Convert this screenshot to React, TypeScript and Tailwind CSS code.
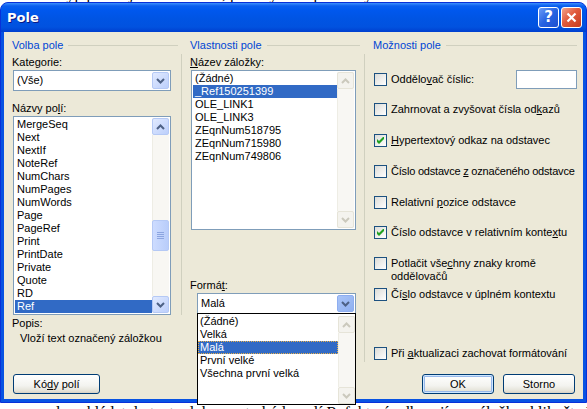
import React from 'react';

const fieldNames = ['MergeSeq', 'Next', 'NextIf', 'NoteRef', 'NumChars', 'NumPages', 'NumWords', 'Page', 'PageRef', 'Print', 'PrintDate', 'Private', 'Quote', 'RD', 'Ref'];
const bookmarks = ['(Žádné)', '_Ref150251399', 'OLE_LINK1', 'OLE_LINK3', 'ZEqnNum518795', 'ZEqnNum715980', 'ZEqnNum749806'];
const formats = ['(Žádné)', 'Velká', 'Malá', 'První velké', 'Všechna první velká'];

function Chevron({ dir, color }: { dir: 'up' | 'down'; color: string }) {
  return (
    <svg width="9" height="6" viewBox="0 0 9 6">
      <polyline points={dir === 'up' ? '1,5 4.5,1.5 8,5' : '1,1 4.5,4.5 8,1'} fill="none" stroke={color} strokeWidth="2" />
    </svg>
  );
}

function ScrollBtn({ dir, disabled }: { dir: 'up' | 'down'; disabled?: boolean }) {
  return (
    <div className={disabled
      ? 'w-[17px] h-[17px] shrink-0 rounded-[2px] border border-[#e6e4d8] bg-[#f4f3ee] flex items-center justify-center'
      : 'w-[17px] h-[17px] shrink-0 rounded-[2px] border border-[#b5c9f5] bg-[linear-gradient(135deg,#e1eaff,#bccffb)] flex items-center justify-center'}>
      <Chevron dir={dir} color={disabled ? '#cbc9bd' : '#4d6185'} />
    </div>
  );
}

function ScrollBar({ disabled, thumbTop }: { disabled?: boolean; thumbTop?: number }) {
  return (
    <div className="w-[17px] h-full flex flex-col bg-[#f8f7f3]">
      <ScrollBtn dir="up" disabled={disabled} />
      <div className="flex-1 border-l border-[#eeede5]">
        {thumbTop !== undefined && (
          <div style={{ marginTop: thumbTop }} className="w-[17px] h-[31px] -ml-px rounded-[2px] border border-[#b5c9f5] bg-[linear-gradient(90deg,#cddcff,#b9cdfa)] flex flex-col items-center justify-center gap-[1px]">
            <div className="w-[7px] h-px bg-[#8ca5e0]" />
            <div className="w-[7px] h-px bg-[#8ca5e0]" />
            <div className="w-[7px] h-px bg-[#8ca5e0]" />
            <div className="w-[7px] h-px bg-[#8ca5e0]" />
          </div>
        )}
      </div>
      <ScrollBtn dir="down" disabled={disabled} />
    </div>
  );
}

function GroupHeader({ title }: { title: string }) {
  return (
    <div className="h-[13px] shrink-0 flex items-center gap-[5px]">
      <span className="text-[#0046d5] whitespace-nowrap">{title}</span>
      <div className="flex-1 h-px bg-[#d0d0bf]" />
    </div>
  );
}

function Check({ checked }: { checked?: boolean }) {
  return (
    <span className="w-[13px] h-[13px] shrink-0 border border-[#1c5180] bg-[linear-gradient(135deg,#dcdcd7,#ffffff)] flex items-center justify-center">
      {checked && (
        <svg width="7" height="7" viewBox="0 0 7 7">
          <polygon points="0,2 2,4 6,0 7,0 7,2 2,7 0,5" fill="#21a121" />
        </svg>
      )}
    </span>
  );
}

function XpButton({ children, def, className }: { children: React.ReactNode; def?: boolean; className: string }) {
  return (
    <div className={`${className} h-[20px] shrink-0 rounded-[3px] border border-[#003c74] bg-[linear-gradient(to_bottom,#ffffff,#f3f3ef_60%,#e3e1d6_90%,#d6d0c5)] flex items-center justify-center ${def ? 'shadow-[inset_0_0_0_1px_#cee7ff,inset_0_0_0_2px_#98b8ea]' : ''}`}>
      {children}
    </div>
  );
}

export default function App() {
  return (
    <div className="w-[587px] h-[409px] bg-white overflow-hidden relative font-['Liberation_Sans',Arial,sans-serif] text-[11px] leading-[13px] text-black">
      {/* document text behind the dialog */}
      <div className="h-[2px] overflow-hidden pl-[62px] whitespace-nowrap font-['Liberation_Serif',serif] text-[16px] leading-[18px]">
        <div className="-mt-[15px]">typ pole a jeho vlastnosti, poté vyberte příslušný formát</div>
      </div>

      <div className="h-[401px] flex flex-col rounded-t-[8px] bg-[#0853e2] border border-[#0831d9]">
        {/* title bar */}
        <div className="h-[29px] shrink-0 rounded-t-[7px] bg-[linear-gradient(to_bottom,#3c8ffc_0px,#0a5eef_3px,#0058ee_7px,#0054e3_16px,#0152df_24px,#003fcf_29px)] flex items-center pl-[6px] pr-[4px]">
          <span className="text-white font-bold text-[13px] font-['DejaVu_Sans',sans-serif] [text-shadow:1px_1px_#0a1883] flex-1">Pole</span>
          <div className="w-[21px] h-[21px] rounded-[3px] border border-white bg-[linear-gradient(135deg,#6b9cf7,#2763e2_50%,#1d4fcf)] flex items-center justify-center text-white font-bold text-[15px] font-['DejaVu_Sans',sans-serif]">?</div>
          <div className="ml-[2px] w-[21px] h-[21px] rounded-[3px] border border-white bg-[linear-gradient(135deg,#f2a48c,#e15a3c_45%,#c53b1e)] flex items-center justify-center">
            <svg width="11" height="11" viewBox="0 0 11 11">
              <path d="M1.5 1.5 L9.5 9.5 M9.5 1.5 L1.5 9.5" stroke="white" strokeWidth="2.2" />
            </svg>
          </div>
        </div>

        {/* content */}
        <div className="flex-1 min-h-0 mx-[3px] mb-[3px] bg-[#ece9d8] flex pl-[8px] pt-[7px]">
          {/* Volba pole */}
          <div className="w-[169px] flex flex-col pr-[3px]">
            <GroupHeader title="Volba pole" />
            <div className="mt-[4px]">Kate<span className="underline">g</span>orie:</div>
            <div className="mt-[1px] ml-[1px] w-[158px] h-[21px] shrink-0 border border-[#7f9db9] bg-white p-[1px] flex">
              <span className="flex-1 px-[2px] leading-[17px]">(Vše)</span>
              <ScrollBtn dir="down" />
            </div>
            <div className="mt-[11px]">Názvy po<span className="underline">l</span>í:</div>
            <div className="mt-[1px] ml-[1px] w-[158px] h-[199px] shrink-0 border border-[#7f9db9] bg-white p-[1px] flex">
              <div className="flex-1 flex flex-col">
                {fieldNames.map((n) => (
                  <div key={n} className={n === 'Ref' ? 'h-[13px] px-[2px] bg-[#316ac5] text-white' : 'h-[13px] px-[2px]'}>{n}</div>
                ))}
              </div>
              <ScrollBar thumbTop={85} />
            </div>
            <div className="mt-[2px]">Popis:</div>
            <div className="mt-[2px] pl-[8px] whitespace-nowrap">Vloží text označený záložkou</div>
            <XpButton className="mt-[29px] ml-[1px] w-[87px]">Kó<span className="underline">d</span>y polí</XpButton>
          </div>

          <div className="w-px mt-[15px] h-[261px] bg-[#d0d0bf]" />

          {/* Vlastnosti pole */}
          <div className="ml-[8px] w-[170px] flex flex-col">
            <GroupHeader title="Vlastnosti pole" />
            <div className="mt-[4px]"><span className="underline">N</span>ázev záložky:</div>
            <div className="mt-[1px] ml-[1px] w-[165px] h-[160px] shrink-0 border border-[#7f9db9] bg-white p-[1px] flex">
              <div className="flex-1 flex flex-col">
                {bookmarks.map((b) => (
                  <div key={b} className={b === '_Ref150251399' ? 'h-[13px] px-[2px] bg-[#316ac5] text-white' : 'h-[13px] px-[2px]'}>{b}</div>
                ))}
              </div>
              <ScrollBar disabled />
            </div>
            <div className="mt-[49px]">Formá<span className="underline">t</span>:</div>
            <div className="relative mt-[1px] ml-[7px] w-[159px] h-[21px] shrink-0 border border-[#7f9db9] bg-white p-[1px] flex">
              <span className="flex-1 px-[2px] leading-[17px]">Malá</span>
              <div className="w-[17px] h-[17px] rounded-[2px] border border-[#8eaef0] bg-[linear-gradient(135deg,#a9c4f7,#8fb0f0)] flex items-center justify-center">
                <Chevron dir="down" color="#4d6185" />
              </div>
              <div className="absolute z-10 left-[-1px] top-full w-[159px] h-[92px] border border-black bg-white flex pt-[1px]">
                <div className="flex-1 flex flex-col">
                  {formats.map((f) => (
                    <div key={f} className={f === 'Malá' ? 'h-[13px] px-[2px] bg-[#316ac5] text-white outline-1 outline-dotted outline-[#e8b04a] -outline-offset-1' : 'h-[13px] px-[2px]'}>{f}</div>
                  ))}
                </div>
                <div className="h-[88px] mt-[1px]">
                  <ScrollBar disabled />
                </div>
              </div>
            </div>
          </div>

          <div className="ml-[4px] w-px mt-[15px] h-[308px] bg-[#d0d0bf]" />

          {/* Možnosti pole */}
          <div className="ml-[8px] w-[204px] flex flex-col whitespace-nowrap">
            <GroupHeader title="Možnosti pole" />
            <div className="mt-[18px] h-[19px] shrink-0 flex items-center">
              <span className="ml-[1px]"><Check /></span>
              <span className="ml-[4px] flex-1">Oddělo<span className="underline">v</span>ač číslic:</span>
              <div className="w-[61px] h-[19px] border border-[#7f9db9] bg-white" />
            </div>
            <div className="mt-[14px] flex items-center gap-[4px] pl-[1px]">
              <Check /><span>Zahrnovat a zvyšovat čísla od<span className="underline">k</span>azů</span>
            </div>
            <div className="mt-[18px] flex items-center gap-[4px] pl-[1px]">
              <Check checked /><span><span className="underline">H</span>ypertextový odkaz na odstavec</span>
            </div>
            <div className="mt-[18px] flex items-center gap-[4px] pl-[1px]">
              <Check /><span className="tracking-[-0.2px]">Číslo odstavce <span className="underline">z</span> označeného odstavce</span>
            </div>
            <div className="mt-[18px] flex items-center gap-[4px] pl-[1px]">
              <Check /><span>Relativní <span className="underline">p</span>ozice odstavce</span>
            </div>
            <div className="mt-[17px] flex items-center gap-[4px] pl-[1px]">
              <Check checked /><span>Číslo odstavce v relativním konte<span className="underline">x</span>tu</span>
            </div>
            <div className="mt-[18px] flex items-start gap-[4px] pl-[1px]">
              <Check /><span>Potlačit vše<span className="underline">c</span>hny znaky kromě<br />oddělovačů</span>
            </div>
            <div className="mt-[5px] flex items-center gap-[4px] pl-[1px]">
              <Check /><span>Čí<span className="underline">s</span>lo odstavce v úplném kontextu</span>
            </div>
            <div className="mt-[46px] flex items-center gap-[4px] pl-[1px]">
              <Check /><span>Při <span className="underline">a</span>ktualizaci zachovat formátování</span>
            </div>
            <div className="mt-[14px] flex justify-end gap-[9px] pr-[2px]">
              <XpButton def className="w-[72px]">OK</XpButton>
              <XpButton className="w-[72px]">Storno</XpButton>
            </div>
          </div>
        </div>
      </div>

      <div className="h-[6px] overflow-hidden pl-[56px] whitespace-nowrap font-['Liberation_Serif',serif] text-[16px] leading-[18px]">
        <div className="mt-[1px]">lze vkládat do textu dokumentu kódy polí Ref, které odkazují na záložky; klikněte Hotovo a dál</div>
      </div>
    </div>
  );
}
